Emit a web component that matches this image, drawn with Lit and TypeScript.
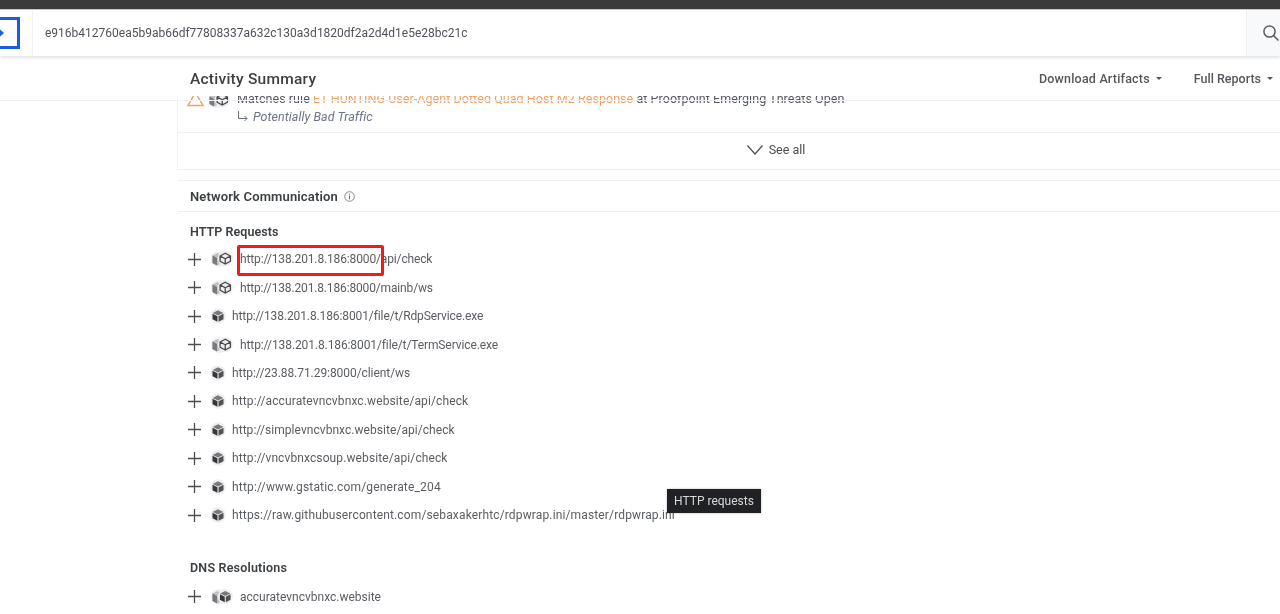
import { LitElement, html, css, svg } from "lit";
import { customElement } from "lit/decorators.js";

const solidCube = svg`<circle cx="9" cy="9" r="8.8" fill="#efefef"/><path d="M9 2.6 15 5.6 9 8.4 3 5.6Z" fill="#77797d"/><path d="M2.8 6.4 8.4 9.2V15.6L2.8 12.6Z" fill="#35373b"/><path d="M15.2 6.4 9.6 9.2v6.4l5.6-3Z" fill="#505256"/>`;
const outlineCube = svg`<circle cx="9" cy="9" r="8.8" fill="#ededed"/><path d="M9 2.8 15 6v6.2L9 15.4 3 12.2V6Z M3 6l6 3.2L15 6M9 9.2v6.2" fill="none" stroke="#45474b" stroke-width="1.5" stroke-linejoin="round"/>`;
const fadedCube = svg`<circle cx="8" cy="9" r="8" fill="#f1f1f1"/><path d="M6.5 3 11 5.4V13L6.5 15.4 1.5 13V5.4Z" fill="#bfc0c2"/><path d="M1.5 5.6 6 8v7.4L1.5 13Z" fill="#77797c"/>`;

const rows: { url: string; double: boolean; ls: number }[] = [
  { url: "http://138.201.8.186:8000/api/check", double: true, ls: -0.14 },
  { url: "http://138.201.8.186:8000/mainb/ws", double: true, ls: -0.15 },
  { url: "http://138.201.8.186:8001/file/t/RdpService.exe", double: false, ls: -0.106 },
  { url: "http://138.201.8.186:8001/file/t/TermService.exe", double: true, ls: -0.104 },
  { url: "http://23.88.71.29:8000/client/ws", double: false, ls: -0.06 },
  { url: "http://accuratevncvbnxc.website/api/check", double: false, ls: 0.12 },
  { url: "http://simplevncvbnxc.website/api/check", double: false, ls: 0.05 },
  { url: "http://vncvbnxcsoup.website/api/check", double: false, ls: 0.11 },
  { url: "http://www.gstatic.com/generate_204", double: false, ls: 0.17 },
  { url: "https://raw.githubusercontent.com/sebaxakerhtc/rdpwrap.ini/master/rdpwrap.ini", double: false, ls: 0.14 },
];

@customElement("app-root")
export class AppRoot extends LitElement {
  static styles = css`
    :host {
      display: block;
      width: 1280px;
      height: 614px;
      overflow: hidden;
      background: #fff;
      font-family: Roboto, "Open Sans", sans-serif;
      color: #4a4d52;
    }
    .page { position: relative; filter: blur(0.5px); height: 614px; overflow: hidden; background: #fff; }
    .chrome { height: 9px; background: #3b3b3b; border-bottom: 1px solid #cfd0d2; }
    .search {
      height: 46px;
      display: flex;
      align-items: center;
      background: #fff;
      box-shadow: 0 1px 4px rgba(0, 0, 0, 0.16);
      position: relative;
      z-index: 2;
    }
    .logo-cell { width: 32px; height: 100%; flex: none; border-right: 1px solid #eef0f2; display: flex; align-items: center; }
    .logo {
      width: 29px;
      height: 32px;
      margin-left: -9px;
      flex: none;
      box-sizing: border-box;
      border: 3px solid #1a5ce6;
      display: flex;
      align-items: center;
    }
    .logo i { width: 0; height: 0; border-left: 7px solid #1a5ce6; border-top: 6px solid transparent; border-bottom: 6px solid transparent; display: block; margin-left: 3px; }
    .hash { flex: 1; padding-left: 12px; font-size: 12px; color: #50535a; }
    .search-btn { width: 34px; height: 100%; flex: none; box-sizing: border-box; background: #f8f9fa; border-left: 1px solid #eef0f2; display: flex; align-items: center; padding-left: 15px; overflow: hidden; }
    .search-btn svg { flex: none; }
    .head-wrap { border-bottom: 1px solid #f0f1f5; margin-top: 1px; height: 43px; position: relative; z-index: 1; }
    .head {
      height: 43px;
      margin-left: 190px;
      display: flex;
      align-items: center;
      justify-content: space-between;
      padding-right: 7px;
    }
    .title { font-size: 15.5px; font-weight: 500; letter-spacing: 0.25px; color: #3c4043; }
    .menus { display: flex; gap: 32px; font-size: 12.5px; font-weight: 500; letter-spacing: 0.2px; color: #54575c; }
    .menus span { display: flex; align-items: center; gap: 6px; }
    .menus .full { letter-spacing: 0; }
    .caret { width: 0; height: 0; border-left: 3px solid transparent; border-right: 3px solid transparent; border-top: 3px solid #54575c; }
    .card { margin: -5px 0 0 177px; width: 1196px; border-left: 1px solid #f1f2f4; border-bottom: 1px solid #eff0f2; }
    .alert-clip { overflow: hidden; border-bottom: 1px solid #eff0f2; display: flex; flex-direction: column; justify-content: flex-end; padding: 0 0 6.5px 9px; height: 29.5px; }
    .alert { display: flex; align-items: flex-start; flex: none; gap: 3px; font-size: 12.5px; letter-spacing: 0.05px; line-height: 18px; color: #55585d; }
    .alert .tri { flex: none; margin-top: 1px; }
    .alert .cube { flex: none; margin: 1px 3px 0 0; }
    .alert .orange { color: #f0a15e; }
    .sub { display: flex; align-items: center; gap: 5px; font-style: italic; color: #6c7488; }
    .sub svg { flex: none; }
    .see { height: 36px; box-sizing: border-box; padding-bottom: 3px; display: flex; align-items: center; justify-content: center; gap: 6px; font-size: 12.5px; color: #4a4d52; }
    .net {
      margin: 10px 0 0 178px;
      height: 30px;
      padding-left: 12px;
      display: flex;
      align-items: center;
      gap: 6px;
      border-top: 1px solid #f0f1f3;
      border-bottom: 1px solid #eceef0;
      font-size: 13px;
      letter-spacing: 0.15px;
      font-weight: 600;
      color: #3c4043;
    }
    .section { margin-left: 190px; }
    h3 { margin: 0; font-size: 12.5px; font-weight: 600; letter-spacing: 0.05px; color: #3c4043; line-height: 16px; }
    .h-http { padding-top: 12px; height: 33px; box-sizing: border-box; }
    .row { height: 28.44px; display: flex; align-items: center; font-size: 12px; color: #5a5d62; }
    .plus { flex: none; width: 13px; height: 13px; margin: 0 10px 0 -2px; }
    .ico { flex: none; display: flex; margin-right: 7px; }
    .ico.single { margin: 0 6px 0 -1px; }
    .h-dns { margin-top: 31px; height: 22px; letter-spacing: 0.2px; }
    .mark { position: absolute; left: 237px; top: 245px; width: 147px; height: 31px; box-sizing: border-box; border: 3px solid #f01c1c; border-radius: 2px; }
    .tip { position: absolute; left: 667px; top: 489px; width: 94px; height: 24px; background: #202124; color: #d8d8d8; font-size: 12px; display: flex; align-items: center; justify-content: center; box-shadow: 0 0 2px rgba(0,0,0,0.3); }
  `;

  private pair(right: unknown) {
    return svg`${fadedCube}<g transform="translate(6.5 0.8) scale(0.86)">${right}</g>`;
  }

  private icon(double: boolean, solidRight = false) {
    return double
      ? html`<svg class="ico" width="22" height="18" viewBox="0 0 22 18">${this.pair(solidRight ? solidCube : outlineCube)}</svg>`
      : html`<svg class="ico single" width="16" height="18" viewBox="0 0 18 18">${solidCube}</svg>`;
  }

  private plus() {
    return html`<svg class="plus" viewBox="0 0 13 13"><path d="M6.5 0v13M0 6.5h13" stroke="#4a4d52" stroke-width="1.3"/></svg>`;
  }

  render() {
    return html`
      <div class="page">
        <div class="chrome"></div>
        <div class="search">
          <div class="logo-cell"><div class="logo"><i></i></div></div>
          <div class="hash">e916b412760ea5b9ab66df77808337a632c130a3d1820df2a2d4d1e5e28bc21c</div>
          <div class="search-btn">
            <svg width="18" height="18" viewBox="0 0 18 18"><circle cx="7.5" cy="7.5" r="5.6" fill="none" stroke="#5a5d62" stroke-width="1.5"/><path d="M11.6 11.6 16.5 16.5" stroke="#5a5d62" stroke-width="1.5"/></svg>
          </div>
        </div>
        <div class="head-wrap">
          <div class="head">
            <span class="title">Activity Summary</span>
            <div class="menus">
              <span>Download Artifacts <i class="caret"></i></span>
              <span class="full">Full Reports <i class="caret"></i></span>
            </div>
          </div>
        </div>
        <div class="card">
          <div class="alert-clip">
            <div class="alert">
              <svg class="tri" width="17" height="16" viewBox="0 0 17 16"><path d="M8.5 1.5 16 14.5H1Z" fill="#fff" stroke="#f0a15e" stroke-width="1.4"/></svg>
              <svg class="cube" width="24" height="18" viewBox="0 0 22 18">${this.pair(outlineCube)}</svg>
              <div>
                <div>Matches rule <span class="orange">ET HUNTING User-Agent Dotted Quad Host M2 Response</span> at Proofpoint Emerging Threats Open</div>
                <div class="sub"><svg width="11" height="12" viewBox="0 0 11 12"><path d="M1.5 0v7.5H10M7.5 5l2.5 2.5L7.5 10" fill="none" stroke="#6a7078" stroke-width="1"/></svg>Potentially Bad Traffic</div>
              </div>
            </div>
          </div>
          <div class="see">
            <svg width="16" height="10" viewBox="0 0 16 10"><path d="M.5.5 8 9 15.5.5" fill="none" stroke="#4a4d52" stroke-width="1.2"/></svg>
            See all
          </div>
        </div>
        <div class="net">Network Communication
          <svg width="11" height="11" viewBox="0 0 11 11"><circle cx="5.5" cy="5.5" r="4.8" fill="none" stroke="#6a6d72" stroke-width="0.8"/><path d="M5.5 4.6v3.6M5.5 2.6v1" stroke="#6a6d72" stroke-width="1"/></svg>
        </div>
        <div class="section">
          <h3 class="h-http">HTTP Requests</h3>
          ${rows.map((r) => html`<div class="row">${this.plus()}${this.icon(r.double)}<span style="letter-spacing:${r.ls}px">${r.url}</span></div>`)}
          <h3 class="h-dns">DNS Resolutions</h3>
          <div class="row">${this.plus()}${this.icon(true, true)}<span>accuratevncvbnxc.website</span></div>
        </div>
        <div class="mark"></div>
        <div class="tip">HTTP requests</div>
      </div>
    `;
  }
}
